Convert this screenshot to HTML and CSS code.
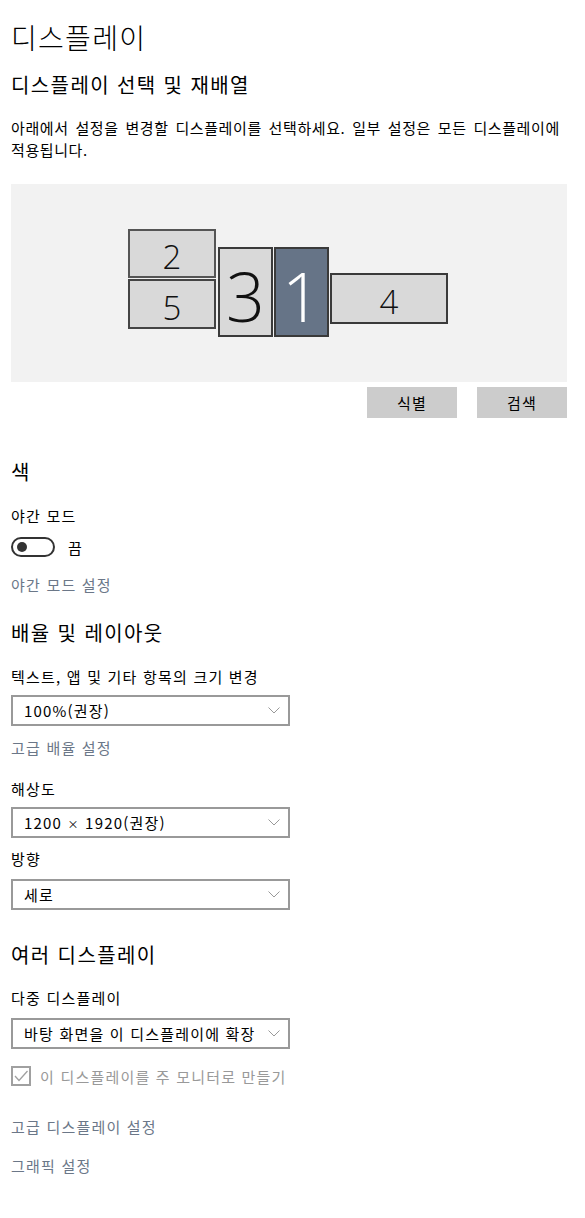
FILE: index.html
```html
<!DOCTYPE html>
<html lang="ko">
<head>
  <meta charset="UTF-8">
  <meta name="viewport" content="width=device-width, initial-scale=1.0">
  <title>디스플레이</title>
  <link rel="stylesheet" href="styles.css">
</head>
<body>
  <div class="page">
    <h1 class="title">디스플레이</h1>

    <h2 class="heading heading-first">디스플레이 선택 및 재배열</h2>
    <p class="desc">아래에서 설정을 변경할 디스플레이를 선택하세요. 일부 설정은 모든 디스플레이에 적용됩니다.</p>

    <div class="arrange">
      <div class="monitor m2">2</div>
      <div class="monitor m5">5</div>
      <div class="monitor big m3">3</div>
      <div class="monitor big m1 selected">1</div>
      <div class="monitor m4">4</div>
    </div>

    <div class="arrange-buttons">
      <button class="btn">식별</button>
      <button class="btn">검색</button>
    </div>

    <h2 class="heading sec-color">색</h2>
    <div class="label night-label">야간 모드</div>
    <div class="toggle-row">
      <span class="toggle"><span class="knob"></span></span>
      <span class="toggle-text">끔</span>
    </div>
    <a class="link night-link" href="#">야간 모드 설정</a>

    <h2 class="heading sec-scale">배율 및 레이아웃</h2>
    <div class="label">텍스트, 앱 및 기타 항목의 크기 변경</div>
    <div class="select">
      <span>100%(권장)</span>
      <svg class="chev" width="12" height="7" viewBox="0 0 12 7"><polyline points="0.5,0.5 6,6 11.5,0.5" fill="none" stroke="#999" stroke-width="1"/></svg>
    </div>
    <a class="link after-select" href="#">고급 배율 설정</a>

    <div class="label label-res">해상도</div>
    <div class="select">
      <span>1200 <small class="times">×</small> 1920(권장)</span>
      <svg class="chev" width="12" height="7" viewBox="0 0 12 7"><polyline points="0.5,0.5 6,6 11.5,0.5" fill="none" stroke="#999" stroke-width="1"/></svg>
    </div>
    <div class="label label-dir">방향</div>
    <div class="select">
      <span>세로</span>
      <svg class="chev" width="12" height="7" viewBox="0 0 12 7"><polyline points="0.5,0.5 6,6 11.5,0.5" fill="none" stroke="#999" stroke-width="1"/></svg>
    </div>

    <h2 class="heading sec-multi">여러 디스플레이</h2>
    <div class="label">다중 디스플레이</div>
    <div class="select">
      <span>바탕 화면을 이 디스플레이에 확장</span>
      <svg class="chev" width="12" height="7" viewBox="0 0 12 7"><polyline points="0.5,0.5 6,6 11.5,0.5" fill="none" stroke="#999" stroke-width="1"/></svg>
    </div>
    <div class="check-row">
      <span class="checkbox">
        <svg width="16" height="16" viewBox="0 0 16 16"><polyline points="2,8 6,12.5 14.5,3" fill="none" stroke="#a0a0a0" stroke-width="1.3"/></svg>
      </span>
      <span class="check-text">이 디스플레이를 주 모니터로 만들기</span>
    </div>

    <a class="link link-adv" href="#">고급 디스플레이 설정</a>
    <a class="link link-gfx" href="#">그래픽 설정</a>
  </div>
</body>
</html>
```

FILE: styles.css
```css
body {
  margin: 0;
  padding: 0;
  background: #ffffff;
  color: #000000;
  font-family: "Noto Sans CJK KR", "Noto Sans", sans-serif;
  word-break: keep-all;
}
.page {
  padding: 17px 18px 40px 11px;
}
.title {
  margin: 0;
  font-size: 28px;
  font-weight: 300;
  line-height: 40px;
  letter-spacing: 1.3px;
}
.heading {
  margin: 0;
  font-size: 20px;
  font-weight: 400;
  line-height: 28px;
  letter-spacing: 1.4px;
}
.heading-first {
  margin-top: 14px;
}
.desc {
  margin: 18px 0 0;
  font-size: 15px;
  line-height: 22px;
  letter-spacing: 0.6px;
  word-spacing: 2px;
}
.label, .link {
  display: block;
  font-size: 15px;
  line-height: 22px;
  letter-spacing: 1.2px;
}
.link {
  color: #6b7788;
  text-decoration: none;
}

/* display arrangement canvas */
.arrange {
  position: relative;
  margin-top: 23px;
  height: 198px;
  background: #f2f2f2;
}
.monitor {
  position: absolute;
  box-sizing: border-box;
  display: flex;
  align-items: center;
  justify-content: center;
  background: #d9d9d9;
  border: 2px solid #3a3a3a;
  font-family: "Open Sans", "Noto Sans", sans-serif;
  font-weight: 300;
  font-size: 33px;
  line-height: 1;
  padding-top: 6px;
  color: #111;
}
.monitor.big {
  font-size: 68px;
  padding-top: 8px;
}
.m2 { left: 117px; top: 45px; width: 88px; height: 49px; border-color: #555; }
.m5 { left: 117px; top: 95px; width: 88px; height: 50px; border-color: #444; }
.m3 { left: 207px; top: 63px; width: 55px; height: 90px; }
.m1 { left: 263px; top: 63px; width: 55px; height: 90px; }
.m4 { left: 319px; top: 89px; width: 118px; height: 51px; }
.monitor.selected {
  background: #667487;
  color: #ffffff;
}

.arrange-buttons {
  display: flex;
  justify-content: flex-end;
  gap: 20px;
  margin-top: 5px;
}
.btn {
  width: 90px;
  height: 31px;
  border: none;
  background: #cccccc;
  font-family: inherit;
  font-size: 15px;
  letter-spacing: 1.2px;
  color: #000;
  padding: 0;
}

.sec-color { margin-top: 40px; }
.night-label { margin-top: 19px; }
.toggle-row {
  display: flex;
  align-items: center;
  gap: 13px;
  margin-top: 10px;
  height: 20px;
  font-size: 15px;
}
.toggle {
  box-sizing: border-box;
  width: 44px;
  height: 20px;
  border: 2px solid #333;
  border-radius: 10px;
  display: flex;
  align-items: center;
  padding-left: 4px;
}
.knob {
  width: 10px;
  height: 10px;
  border-radius: 50%;
  background: #333;
}
.night-link { margin-top: 17px; }

.sec-scale { margin-top: 23px; }
.sec-scale + .label { margin-top: 19px; }
.select {
  box-sizing: border-box;
  display: flex;
  align-items: center;
  justify-content: space-between;
  width: 279px;
  height: 31px;
  margin-top: 7px;
  padding: 0 8px 0 11px;
  border: 2px solid #999999;
  font-size: 15px;
  letter-spacing: 1.2px;
}
.times {
  font-size: 11px;
}
.chev { flex: none; }
.after-select { margin-top: 11px; }
.label-res { margin-top: 19px; }
.label-dir { margin-top: 10px; }
.label-dir + .select { margin-top: 9px; }

.sec-multi { margin-top: 31px; }
.sec-multi + .label { margin-top: 18px; }
.sec-multi + .label + .select { margin-top: 9px; }
.check-row {
  display: flex;
  align-items: center;
  gap: 9px;
  margin-top: 16px;
  height: 22px;
  font-size: 15px;
  letter-spacing: 1.2px;
  color: #999999;
}
.checkbox {
  box-sizing: border-box;
  width: 20px;
  height: 20px;
  border: 2px solid #a0a0a0;
  display: flex;
  align-items: center;
  justify-content: center;
}
.link-adv { margin-top: 29px; }
.link-gfx { margin-top: 17px; }
```
